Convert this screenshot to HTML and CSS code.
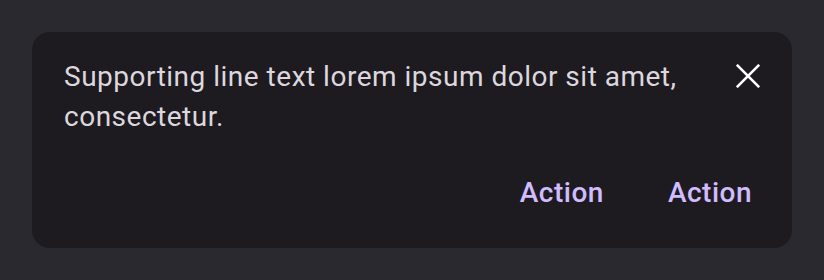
FILE: index.html
```html
<!DOCTYPE html>
<html lang="en">
<head>
	<meta charset="UTF-8">
	<title>Snackbar</title>
	<link rel="stylesheet" href="styles.css">
</head>
<body>
	<div class="snackbar">
		<div class="snack-top">
			<p class="snack-text">Supporting line text lorem ipsum dolor sit amet, consectetur.</p>
			<span class="snack-close">
				<svg width="24" height="24" viewBox="0 0 24 24"><path d="M0.8 0.8L23.2 23.2M23.2 0.8L0.8 23.2" stroke="#fff" stroke-width="2.6" fill="none"/></svg>
			</span>
		</div>
		<div class="snack-actions">
			<span class="snack-btn">Action</span>
			<span class="snack-btn">Action</span>
		</div>
	</div>
</body>
</html>
```

FILE: styles.css
```css
html,body{margin:0;padding:0;}
body{background:#2b2930;font-family:Roboto,"Liberation Sans",sans-serif;padding:32px;height:280px;box-sizing:border-box;}
.snackbar{background:#1d1b20;border-radius:18px;height:216px;box-sizing:border-box;padding:25px 32px 0 32px;}
.snack-top{display:flex;justify-content:space-between;align-items:flex-start;}
.snack-text{margin:0;color:#dcd7df;font-size:28px;line-height:40px;letter-spacing:0.5px;width:650px;}
.snack-close{display:flex;margin:7px 0 0 0;}
.snack-actions{display:flex;justify-content:flex-end;gap:64px;margin-top:36px;padding-right:8px;}
.snack-btn{color:#d0bcff;font-size:28px;font-weight:500;line-height:40px;letter-spacing:0.5px;}
```
